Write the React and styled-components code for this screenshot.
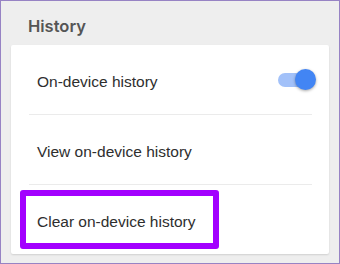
import styled, { createGlobalStyle } from "styled-components"

const GlobalStyle = createGlobalStyle`
  html, body {
    margin: 0;
    padding: 0;
    background: #eeeeee;
  }
  body {
    font-family: "Liberation Sans", Arial, sans-serif;
    -webkit-font-smoothing: antialiased;
  }
`

const Frame = styled.div`
  width: 340px;
  height: 264px;
  box-sizing: border-box;
  border: 1px solid #9783c4;
  background: #eeeeee;
  padding: 0 10px;
  overflow: hidden;
`

// title uses Inter semibold, closer to the original's medium weight
const Heading = styled.h2`
  margin: 0;
  padding: 15px 0 9px 17px;
  font-family: Inter, "Liberation Sans", Arial, sans-serif;
  font-size: 16.5px;
  line-height: 20px;
  font-weight: 600;
  color: #555555;
`

const Card = styled.div`
  background: #fff;
  border-radius: 2px;
  box-shadow: 0 1px 2px rgba(0, 0, 0, 0.13);
`

const Row = styled.div`
  height: 69px;
  box-sizing: border-box;
  display: flex;
  align-items: center;
  justify-content: space-between;
  padding: ${p => p.$pad || "4px 13px 0 26px"};
  font-size: 15.5px;
  line-height: 18px;
  color: #2e2e2e;
`

const Divider = styled.div`
  height: 1px;
  margin: 0 17px 0 18px;
  background: #ebebeb;
`

const Highlight = styled.div`
  width: 199px;
  height: 59px;
  box-sizing: border-box;
  border: 6px solid #a300ff;
  border-radius: 3px;
  display: flex;
  align-items: center;
  padding: 4px 0 0 11px;
`

const Switch = styled.div`
  position: relative;
  width: 38px;
  height: 21px;
  margin-top: -4px;
`

const Track = styled.div`
  position: absolute;
  left: 0;
  top: 4px;
  width: 32px;
  height: 14px;
  border-radius: 7px;
  background: #a2c1f9;
`

const Thumb = styled.div`
  position: absolute;
  right: 0;
  top: 0;
  width: 21px;
  height: 21px;
  border-radius: 50%;
  background: #4285f4;
  box-shadow: 0 1px 3px rgba(0, 0, 0, 0.35);
`

export default function App() {
  return (
    <>
      <GlobalStyle />
      <Frame>
        <Heading>History</Heading>
        <Card>
          <Row>
            <span>On-device history</span>
            <Switch>
              <Track />
              <Thumb />
            </Switch>
          </Row>
          <Divider />
          <Row>
            <span>View on-device history</span>
          </Row>
          <Divider />
          <Row $pad="5px 0 5px 9px">
            <Highlight>Clear on-device history</Highlight>
          </Row>
        </Card>
      </Frame>
    </>
  )
}
